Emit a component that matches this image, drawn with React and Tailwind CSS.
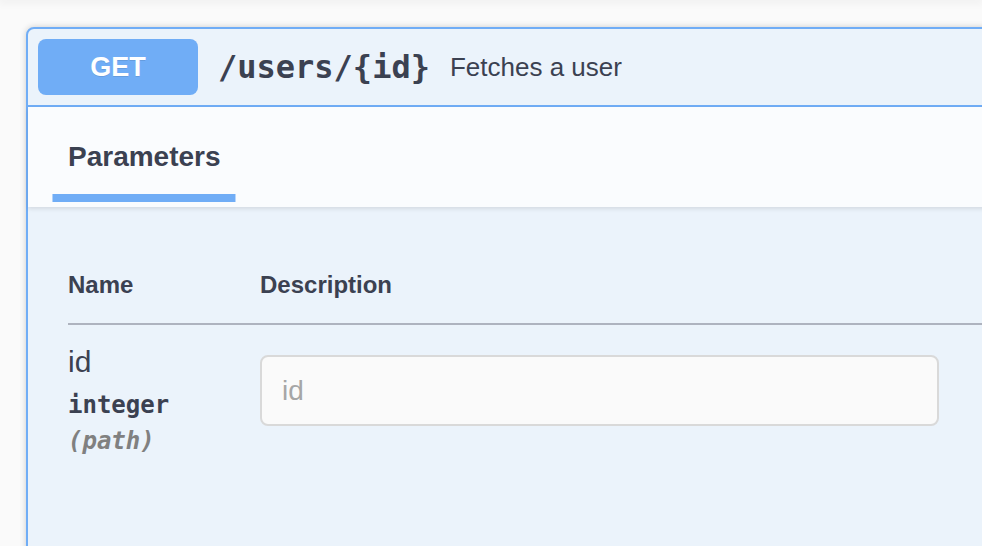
const sans = "font-['Liberation_Sans',Arial,sans-serif]"
const mono = "font-['DejaVu_Sans_Mono',monospace]"

const ParamRow = ({ name, type, where }) => (
  <div className="flex border-t-0">
    <div className="w-[192px] shrink-0 pt-5">
      <div className={`${sans} text-[30px] leading-[34px] text-[#3b4151]`}>{name}</div>
      <div className={`${mono} mt-3 text-[24px] font-bold leading-[28px] text-[#3b4151]`}>{type}</div>
      <div className={`${mono} mt-2 text-[24px] font-bold italic leading-[28px] text-[#808080]`}>{where}</div>
    </div>
    <div className="pt-5">
      <input
        placeholder={name}
        className={`${sans} my-[10px] block h-[71px] w-[679px] rounded-lg border-2 border-[#d9d9d9] bg-[#fafafa] px-5 text-[28px] text-[#3b4151] outline-none placeholder:text-[#a6a6a6]`}
      />
    </div>
  </div>
)

export default function App() {
  return (
    <div className="h-[546px] overflow-hidden bg-[#fafafa]">
      <div className="h-0 shadow-[0_0_8px_2px_rgba(0,0,0,0.08)]" />

      <div className="ml-[26px] mt-[27px] w-[1000px] rounded-tl-lg border-2 border-[#70adf6] bg-[#ebf3fb] shadow-[0_0_6px_rgba(0,0,0,0.19)]">
        {/* summary bar */}
        <div className="flex items-center border-b-2 border-[#70adf6] p-[10px]">
          <span className={`${sans} flex h-[56px] w-[160px] items-center justify-center rounded-lg bg-[#70adf6] text-[27px] font-bold text-white [text-shadow:0_1px_0_rgba(0,0,0,0.1)]`}>
            GET
          </span>
          <span className={`${mono} pl-5 text-[32px] font-bold text-[#3b4151]`}>/users/{'{id}'}</span>
          <span className={`${sans} pl-5 text-[26px] text-[#3b4151]`}>Fetches a user</span>
        </div>

        {/* tab header */}
        <div className="flex h-[100px] items-center bg-[#fafcfe] px-10 shadow-[0_2px_4px_rgba(0,0,0,0.1)]">
          <h4 className={`${sans} text-[28px] font-bold text-[#3b4151]`}>
            <span className="relative">
              Parameters
              <span className="absolute -bottom-[30px] left-1/2 h-2 w-[120%] -translate-x-1/2 bg-[#70adf6]" />
            </span>
          </h4>
        </div>

        {/* parameters table */}
        <div className="h-[400px] px-10 pt-10">
          <div className={`${sans} flex border-b-2 border-[#aeb3bf] py-6 text-[24px] font-bold leading-[28px] text-[#3b4151]`}>
            <div className="w-[192px]">Name</div>
            <div>Description</div>
          </div>
          <ParamRow name="id" type="integer" where="(path)" />
        </div>
      </div>
    </div>
  )
}
